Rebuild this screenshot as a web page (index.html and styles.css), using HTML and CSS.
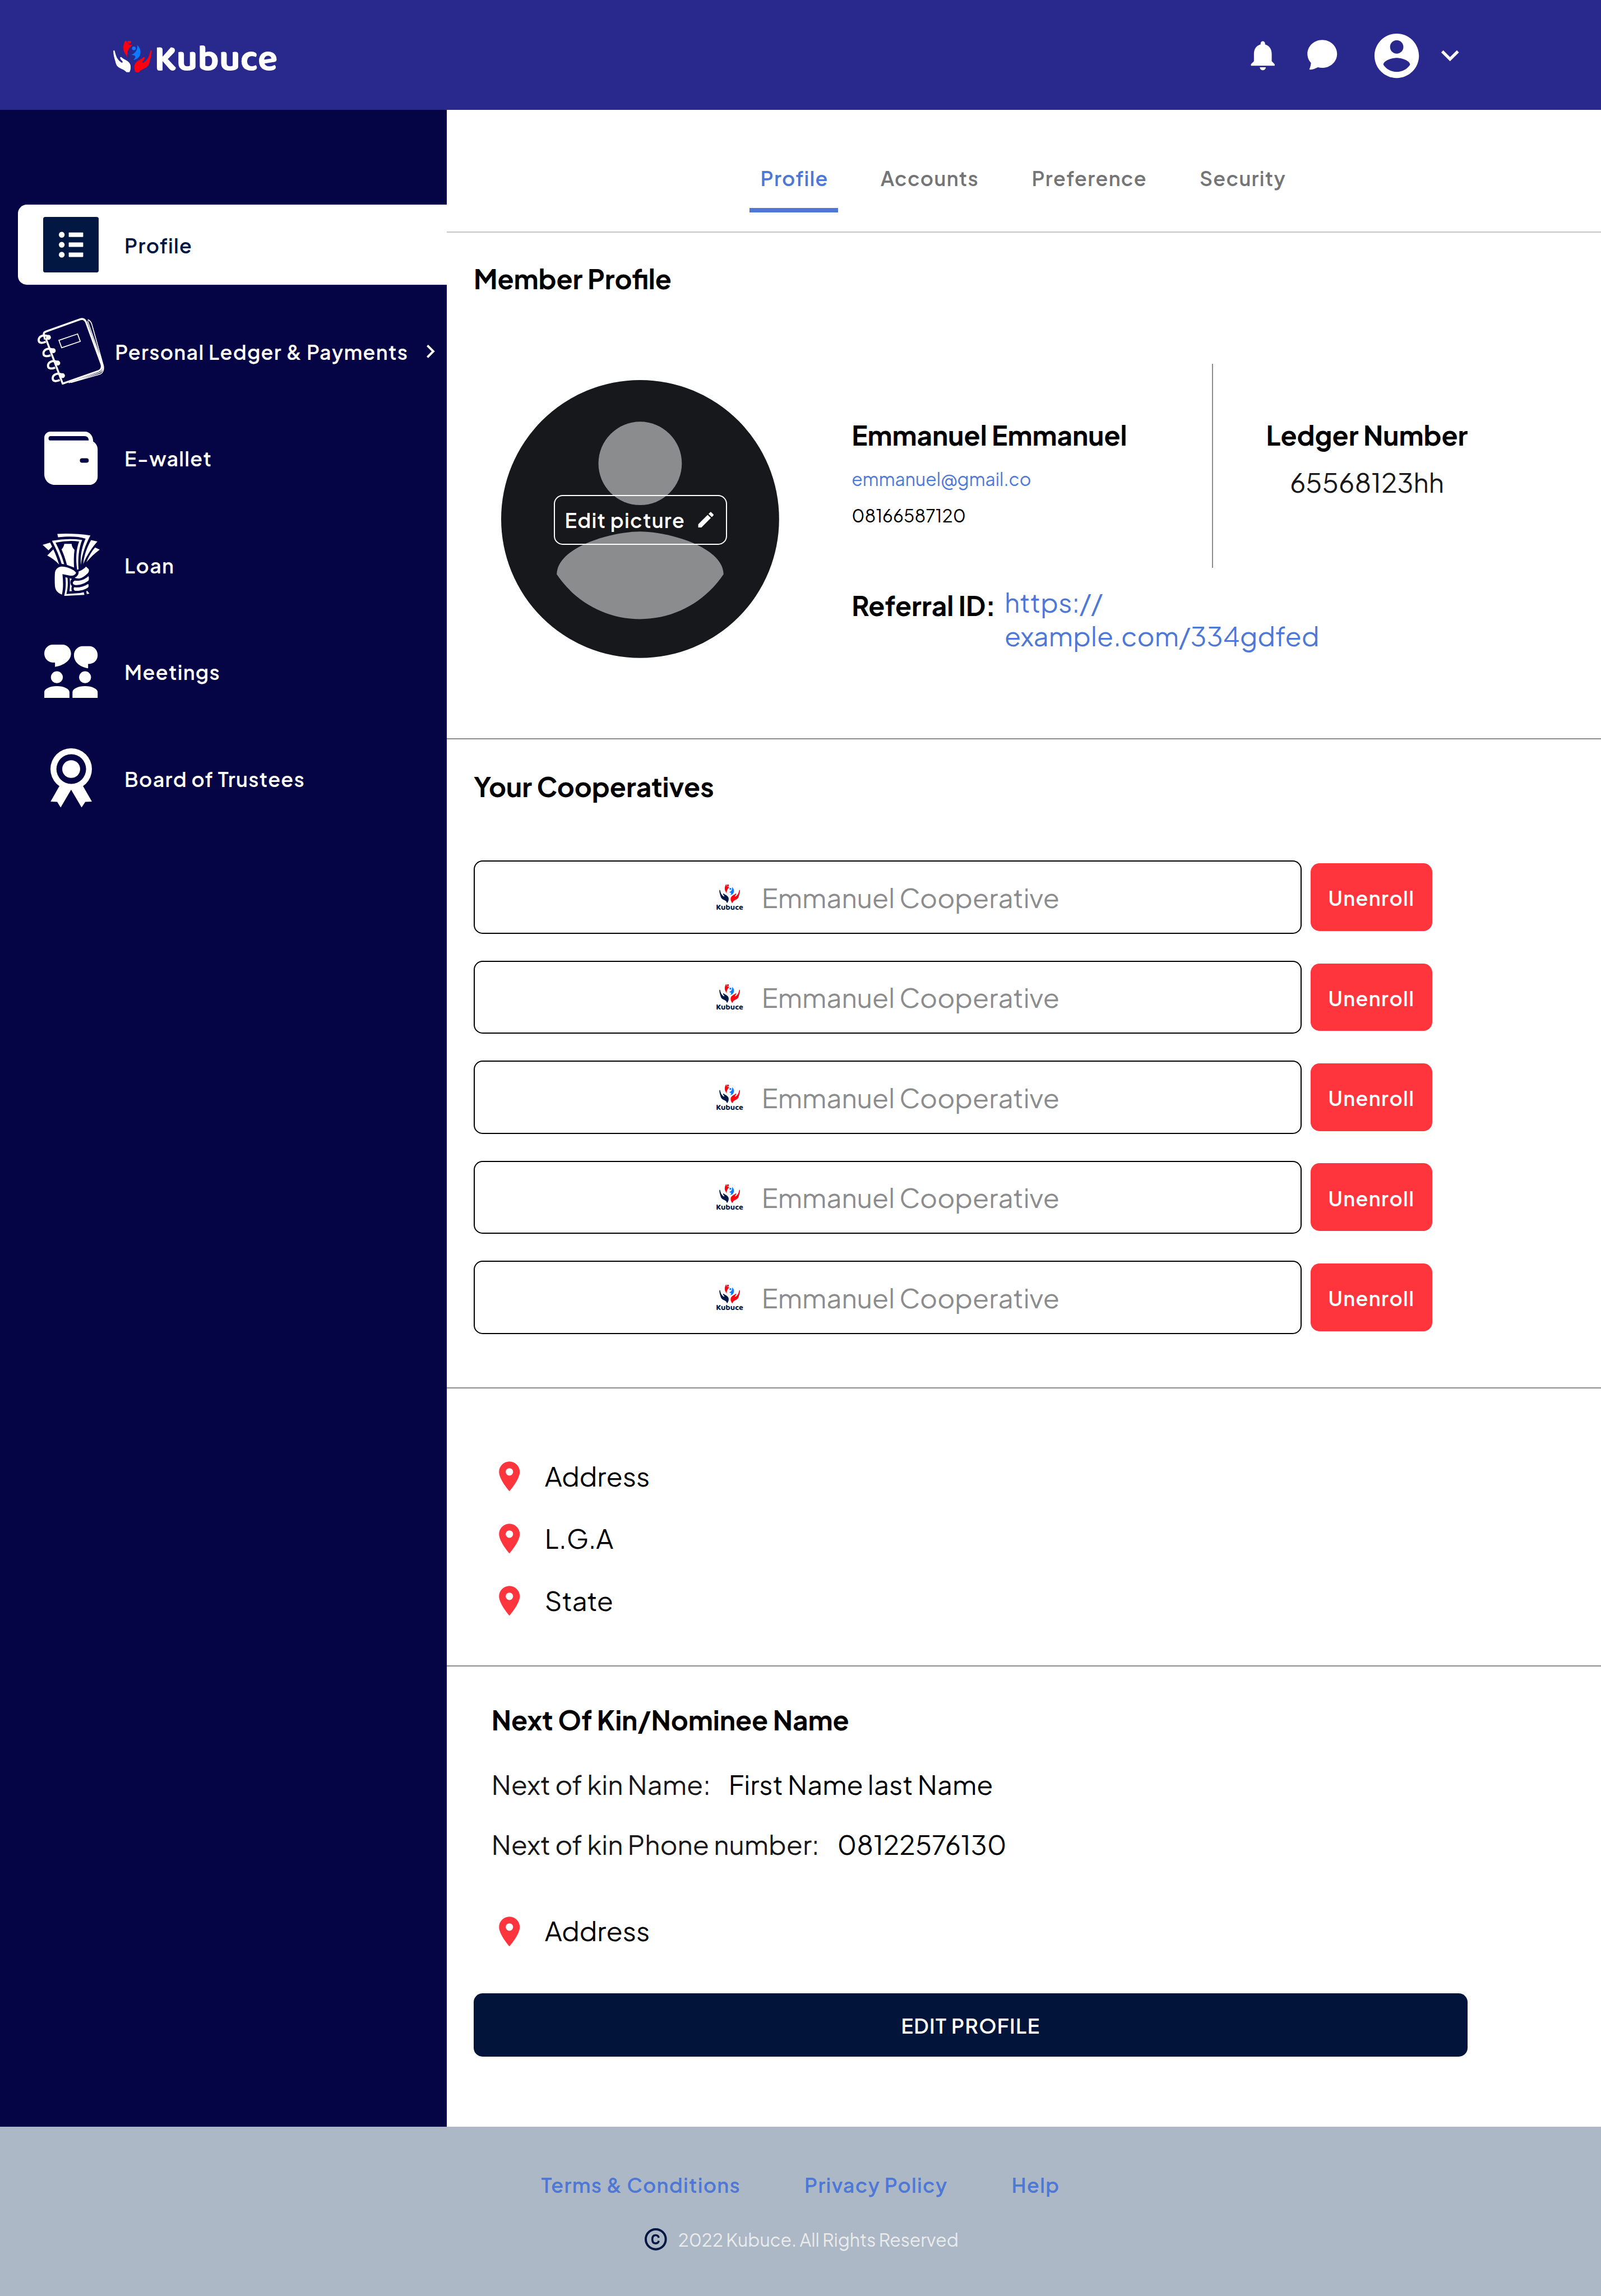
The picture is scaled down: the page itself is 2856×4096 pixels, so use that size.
FILE: index.html
```html
<!DOCTYPE html>
<html lang="en">
<head>
<meta charset="utf-8">
<title>Kubuce - Member Profile</title>
<link rel="stylesheet" href="styles.css">
</head>
<body>
<svg class="sprite" aria-hidden="true">
  <symbol id="palm" viewBox="78 79 313 285" overflow="visible">
    <path d="M79 172Q84 164 90 174C97 202 103 226 117 242C125 252 135 262 145 268C152 270 157 266 153 259C147 248 134 242 134 229C135 221 143 222 148 228C160 240 178 244 196 258C212 271 220 285 219 305C219 325 215 335 209 346L200 364L192 364L185 346C178 333 155 323 130 311C105 298 100 280 94 255C84 222 78 200 79 172Z"/>
  </symbol>
  <symbol id="people" viewBox="78 79 313 285" overflow="visible">
    <path fill="#ff0011" d="M389 172Q384 164 378 174C371 202 365 226 351 242C343 252 333 262 323 268C316 270 311 266 315 259C321 248 334 242 334 229C333 221 325 222 320 228C308 240 290 244 272 258C256 271 248 285 249 305C249 325 253 335 259 346L268 364L276 364L287 346C292 333 313 323 338 311C363 298 368 280 374 255C384 222 390 200 389 172Z"/>
    <path fill="#ff0011" d="M184 79C160 108 156 145 163 172C170 192 186 210 191 229C186 195 192 158 233 126C205 125 186 118 184 79Z"/>
    <circle fill="#ff0011" cx="208" cy="101" r="15"/>
    <circle fill="#0a7bff" cx="245" cy="153" r="15"/>
    <path fill="#0a7bff" d="M272 125C300 150 308 190 288 220C276 236 262 243 240 248C250 238 257 228 257 218C250 208 238 208 224 205C248 197 278 172 272 125Z"/>
  </symbol>
  <symbol id="coop" viewBox="0 0 25 24">
    <use href="#palm" x="3.1" y="0" width="18.7" height="17" fill="#021843"/>
    <use href="#people" x="3.1" y="0" width="18.7" height="17"/>
    <text class="coop-word" x="0.1" y="23.3" textLength="24.6" lengthAdjust="spacingAndGlyphs">Kubuce</text>
  </symbol>
  <symbol id="pin" viewBox="0 0 24 24">
    <path d="M12 2C8.13 2 5 5.13 5 9c0 5.25 7 13 7 13s7-7.75 7-13c0-3.87-3.13-7-7-7zm0 9.5a2.5 2.5 0 0 1 0-5 2.5 2.5 0 0 1 0 5z"/>
  </symbol>
  <symbol id="account" viewBox="0 0 24 24">
    <path d="M12 2C6.48 2 2 6.48 2 12s4.48 10 10 10 10-4.48 10-10S17.52 2 12 2zm0 3c1.66 0 3 1.34 3 3s-1.34 3-3 3-3-1.34-3-3 1.34-3 3-3zm0 14.2c-2.5 0-4.71-1.28-6-3.22.03-1.99 4-3.08 6-3.08 1.99 0 5.97 1.09 6 3.08-1.29 1.94-3.5 3.22-6 3.22z"/>
  </symbol>
</svg>

<header class="topbar">
  <svg class="logo" viewBox="78 -30 1350 499">
    <svg x="78" y="93" width="313" height="253" viewBox="78 93 313 253">
      <use href="#palm" x="78" y="79" width="313" height="285" fill="#fff"/>
      <use href="#people" x="78" y="79" width="313" height="285"/>
    </svg>
    <text class="logo-word" x="410" y="330" textLength="1000" lengthAdjust="spacing">Kubuce</text>
  </svg>
  <div class="actions">
    <svg class="ico bell" viewBox="0 0 24 24"><path d="M12 22c1.1 0 2-.9 2-2h-4c0 1.1.9 2 2 2zm6-6v-5c0-3.07-1.64-5.64-4.5-6.32V4c0-.83-.67-1.5-1.5-1.5s-1.5.67-1.5 1.5v.68C7.63 5.36 6 7.92 6 11v5l-2 2v1h16v-1l-2-2z"/></svg>
    <svg class="ico chat" viewBox="0 0 24 24"><path d="M12 2c5.52 0 10 4.2 10 9.4s-4.48 9.4-10 9.4c-1 0-2-.15-2.95-.42C7.6 21.2 5.5 22 3.6 22c-.25 0-.3-.25-.2-.5.5-1.2.95-2.5 1-4.1C2.9 15.8 2 13.7 2 11.4 2 6.2 6.48 2 12 2z"/></svg>
    <svg class="ico user"><use href="#account"/></svg>
    <svg class="ico" viewBox="0 0 24 24"><path d="M16.59 8.59 12 13.17 7.41 8.59 6 10l6 6 6-6z"/></svg>
  </div>
</header>

<div class="layout">
  <nav class="sidebar">
    <a class="item active">
      <svg class="i50" viewBox="0 0 50 50"><rect width="50" height="50" rx="2" fill="#021843"/><g fill="#fff"><circle cx="16.7" cy="16" r="2.6"/><circle cx="16.7" cy="25" r="2.6"/><circle cx="16.7" cy="34" r="2.6"/><rect x="23" y="14" width="13" height="4" rx=".4"/><rect x="23" y="23" width="13" height="4" rx=".4"/><rect x="23" y="32" width="13" height="4" rx=".4"/></g></svg>
      <span>Profile</span>
    </a>
    <a class="item wide">
      <svg class="i60" viewBox="0 0 60 60" fill="none" stroke="#fff">
        <path stroke-width="1.7" d="M6.6 19.5L5.6 14.6Q5.5 13.2 7.3 12.4L38.3 1.3Q42 0 43.7 4L57.4 41.5Q58.8 46 55 47.8L22.6 59.2L7.4 18.5"/>
        <path stroke-width=".8" d="M45.2 1.7Q48 2.6 49 6.5L59.3 43.5Q60 48.5 56.5 50.5L30 58.2M45 2.8L58.8 42.5Q59.6 47 56 49.2L28 58.5"/>
        <path stroke-width=".9" d="M19.2 20.2L36 14.5L38.4 21.2L21.7 26.9Z"/>
        <g stroke-width="1.9"><path d="M9.6 16.6C5 14.6 1 16.8 1 20C1 22.8 4 23 7.4 21.6"/><path d="M13.8 28.6C9.2 26.6 5.3 28.8 5.3 32C5.3 34.8 8.3 35 11.7 33.6"/><path d="M18 39.7C13.4 37.7 9.4 39.9 9.4 43.1C9.4 45.9 12.4 46.1 15.8 44.7"/><path d="M22.2 51C17.6 49 13.6 51.2 13.6 54.4C13.6 57.2 16.6 57.4 20 56"/></g>
        <g fill="#fff" stroke="none"><circle cx="9.8" cy="17.6" r="2.2"/><circle cx="14.1" cy="29.6" r="2.2"/><circle cx="18.2" cy="40.7" r="2.2"/><circle cx="22.4" cy="52" r="2.2"/></g>
      </svg>
      <span>Personal Ledger &amp; Payments</span>
      <svg class="arrow" viewBox="0 0 24 24"><path d="M10 6 8.59 7.41 13.17 12l-4.58 4.59L10 18l6-6z"/></svg>
    </a>
    <a class="item">
      <svg class="i48" viewBox="0 0 48 48"><path fill-rule="evenodd" d="M5.500 0H36.500C41 0 44 4 44 9C46.500 10.500 48 13 48 16V40.500C48 44.700 44.700 48 40.500 48H9.500C4.200 48 0 43.800 0 38.500V5.500C0 2.500 2.500 0 5.500 0ZM5.800 4A2 2 0 0 0 5.800 8H40C40 5.500 38.500 4 36.200 4ZM34 24A2 2 0 0 0 34 28H38A2 2 0 0 0 38 24Z"/></svg>
      <span>E-wallet</span>
    </a>
    <a class="item">
      <svg class="loan" viewBox="97 929 433 488" preserveAspectRatio="none">
        <path d="M208 931Q340 925 458 943C420 1020 395 1090 386 1175C380 1100 395 1030 422 968C360 948 290 950 214 958Z"/>
        <path d="M463 979L511 991C470 1040 430 1100 404 1168C410 1100 430 1040 463 979Z"/>
        <path d="M494 1038L529 1054C490 1082 455 1120 428 1153C445 1110 465 1070 494 1038Z"/>
        <path d="M97 1017L154 999L169 1031L142 1060Z"/>
        <path d="M178 1052C195 1090 210 1130 222 1172C195 1140 165 1118 132 1100Z"/>
        <path d="M168 985Q285 962 396 978C370 1040 362 1130 369 1208L358 1212C346 1130 350 1050 373 990Q290 980 195 999C220 1050 245 1110 260 1169L241 1166C225 1110 200 1050 168 985Z"/>
        <path d="M261 1009H316C318 1030 326 1044 338 1056C332 1100 332 1150 335 1195L281 1174C270 1130 256 1090 240 1052C252 1040 258 1026 261 1009Z"/>
        <path d="M190 1235C195 1205 215 1187 245 1187C290 1190 335 1212 350 1235C345 1250 330 1260 305 1258L247 1247C252 1300 255 1355 243 1407C210 1393 194 1375 190 1340Q187 1290 190 1235Z"/>
        <path d="M369 1226C390 1218 410 1205 425 1187L445 1207C450 1220 446 1230 438 1240C415 1262 395 1278 375 1280C360 1281 345 1280 339 1273C355 1270 372 1250 369 1226Z"/>
        <path d="M340 1297C380 1303 415 1290 443 1262C448 1275 448 1285 444 1297C415 1320 380 1334 345 1332C325 1330 315 1310 340 1297Z"/>
        <path d="M335 1350C375 1353 410 1345 441 1323C446 1335 445 1343 441 1350C415 1370 380 1380 343 1377C330 1372 330 1358 335 1350Z"/>
        <path d="M269 1271L285 1275C290 1320 287 1360 277 1402L380 1395L408 1388L413 1409L260 1417C272 1370 275 1320 269 1271Z"/>
        <path d="M302 1278L318 1284C300 1305 306 1325 318 1340C313 1355 313 1368 319 1379L300 1381C305 1345 305 1310 302 1278Z"/>
        <path d="M427 1382L434 1377L451 1399L431 1402Z"/>
      </svg>
      <span>Loan</span>
    </a>
    <a class="item">
      <svg class="i48" viewBox="112 120 403 432" preserveAspectRatio="none">
        <path d="M176 120H249C285 120 314 152 314 192C314 250 258 290 193 300V265H176C140 265 112 232 112 192C112 152 140 120 176 120Z"/>
        <path d="M402 132H452C488 132 515 164 515 205C515 245 488 277 443 277V312C380 300 336 262 336 205C336 164 366 132 402 132Z"/>
        <ellipse cx="207" cy="384" rx="45" ry="48"/><ellipse cx="420" cy="384" rx="45" ry="48"/>
        <path d="M112 552V504C112 478 155 456 207 456S302 478 302 504V552ZM325 552V504C325 478 368 456 420 456S515 478 515 504V552Z"/>
      </svg>
      <span>Meetings</span>
    </a>
    <a class="item">
      <svg class="award" viewBox="157 960 313 480" preserveAspectRatio="none">
        <path fill-rule="evenodd" d="M157 1128A156.500 168 0 1 1 470 1128A156.500 168 0 1 1 157 1128ZM202 1128A112 120 0 1 0 426 1128A112 120 0 1 0 202 1128Z"/>
        <ellipse cx="313.500" cy="1128" rx="67.500" ry="72"/>
        <path d="M224 1267L158 1391L208 1394L234 1439L313 1295L392 1439L420 1394L470 1391L403 1267Z"/>
      </svg>
      <span>Board of Trustees</span>
    </a>
  </nav>

  <main class="main">
    <div class="tabs">
      <a class="tab on">Profile</a>
      <a class="tab accounts">Accounts</a>
      <a class="tab preference">Preference</a>
      <a class="tab">Security</a>
    </div>

    <section class="section member">
      <h2>Member Profile</h2>
      <div class="profile">
        <div class="avatar">
          <svg class="portrait" viewBox="2 2 20 20"><circle cx="12" cy="12" r="10" fill="#17181b"/><circle cx="12" cy="8" r="3" fill="#8b8c8e"/><path fill="#8b8c8e" d="M12 19.200c-2.500 0-4.710-1.280-6-3.220.03-1.990 4-3.080 6-3.080 1.990 0 5.970 1.090 6 3.080-1.290 1.940-3.500 3.220-6 3.220z"/></svg>
          <button class="edit-picture">Edit picture
            <svg viewBox="0 0 24 24"><path d="M3 17.250V21h3.750L17.810 9.940l-3.750-3.750L3 17.250zM20.710 7.040c.39-.39.39-1.020 0-1.410l-2.340-2.340c-.39-.39-1.020-.39-1.410 0l-1.830 1.830 3.750 3.750 1.830-1.830z"/></svg>
          </button>
        </div>
        <div class="details">
          <div class="facts">
            <div class="who">
              <p class="strong">Emmanuel Emmanuel</p>
              <p class="email">emmanuel@gmail.co</p>
              <p class="phone">08166587120</p>
            </div>
            <div class="ledger">
              <p class="strong">Ledger Number</p>
              <p class="number">65568123hh</p>
            </div>
          </div>
          <div class="referral">
            <p class="strong">Referral ID:</p>
            <p class="link">https://<br>example.com/334gdfed</p>
          </div>
        </div>
      </div>
    </section>

    <section class="section coops">
      <h2>Your Cooperatives</h2>
      <ul class="coop-list">
        <li><div class="coop"><svg><use href="#coop"/></svg><span>Emmanuel Cooperative</span></div><button class="unenroll">Unenroll</button></li>
        <li><div class="coop"><svg><use href="#coop"/></svg><span>Emmanuel Cooperative</span></div><button class="unenroll">Unenroll</button></li>
        <li><div class="coop"><svg><use href="#coop"/></svg><span>Emmanuel Cooperative</span></div><button class="unenroll">Unenroll</button></li>
        <li><div class="coop"><svg><use href="#coop"/></svg><span>Emmanuel Cooperative</span></div><button class="unenroll">Unenroll</button></li>
        <li><div class="coop"><svg><use href="#coop"/></svg><span>Emmanuel Cooperative</span></div><button class="unenroll">Unenroll</button></li>
      </ul>
    </section>

    <section class="section places">
      <p class="place"><svg><use href="#pin"/></svg><span>Address</span></p>
      <p class="place"><svg><use href="#pin"/></svg><span>L.G.A</span></p>
      <p class="place"><svg><use href="#pin"/></svg><span>State</span></p>
    </section>

    <section class="section kin">
      <h2>Next Of Kin/Nominee Name</h2>
      <p class="pair"><span class="label">Next of kin Name:</span><span>First Name last Name</span></p>
      <p class="pair"><span class="label">Next of kin Phone number:</span><span>08122576130</span></p>
      <p class="place"><svg><use href="#pin"/></svg><span>Address</span></p>
      <button class="edit-profile">EDIT PROFILE</button>
    </section>
  </main>
</div>

<footer class="footer">
  <div class="links"><a>Terms &amp; Conditions</a><a>Privacy Policy</a><a>Help</a></div>
  <p class="copy">
    <svg viewBox="0 0 24 24" fill="none" stroke="#021843"><circle cx="12" cy="12" r="9" stroke-width="2"/><path stroke-width="1.800" d="M14.700 10.700C14.400 9.200 13.400 8.300 11.900 8.300C10 8.300 8.900 9.700 8.900 12S10 15.700 11.900 15.700C13.400 15.700 14.500 14.800 14.700 13.400"/></svg>
    <span>2022 Kubuce. All Rights Reserved</span>
  </p>
</footer>
</body>
</html>
```
FILE: styles.css
```css
/* 1rem = 10 layout units; the page is 144rem wide */
html { font-size: calc(100vw / 144); }
* { box-sizing: border-box; margin: 0; padding: 0; }
body {
  font-family: "Plus Jakarta Sans", Inter, sans-serif;
  font-size: 2.4rem;
  font-weight: 400;
  line-height: 3rem;
  color: #000;
  background: #fff;
}
.sprite { display: none; }
svg { display: block; flex: none; }
button { font-family: inherit; border: 0; cursor: pointer; }
ul { list-style: none; }

/* Top bar */
.topbar {
  display: flex;
  justify-content: space-between;
  align-items: center;
  height: 9.9rem;
  padding: 0.1rem 12rem 0 10.2rem;
  background: #29288d;
  fill: #fff;
}
.logo { width: 15rem; height: 5.544rem; margin-top: 0.2rem; overflow: visible; }
.logo-word, .coop-word { font-family: "Baloo 2", Inter, sans-serif; font-weight: 700; }
.logo-word { font-size: 300px; }
.coop-word { font-size: 7.4px; fill: #021843; }
.actions { display: flex; align-items: center; }
.ico { width: 3.2rem; height: 3.2rem; }
.bell { margin-right: 2.13rem; }
.chat { margin: -0.14rem 2.67rem 0 0; }
.user { width: 4.8rem; height: 4.8rem; margin-right: 0.8rem; }

.layout { display: flex; height: 181.4rem; }

/* Sidebar */
.sidebar {
  display: flex;
  flex-direction: column;
  gap: 2.4rem;
  width: 40.2rem;
  padding: 8.5rem 0 0 1.6rem;
  background: #050444;
}
.item {
  display: grid;
  grid-template-columns: 5rem auto;
  justify-content: start;
  justify-items: center;
  align-items: center;
  column-gap: 2.3rem;
  height: 7.2rem;
  padding-left: 2.3rem;
  font-size: 1.8rem;
  font-weight: 600;
  letter-spacing: 0.036em;
  line-height: 2.4rem;
  color: #fff;
  fill: #fff;
}
.item span { padding-top: 0.12rem; }
.item.active { background: #fff; color: #021843; border-radius: 0.8rem 0 0 0.8rem; }
.item.wide {
  grid-template-columns: 6rem auto 2.4rem;
  column-gap: 0.95rem;
  padding-left: 1.8rem;
}
.item.wide span { margin-right: -0.15rem; }
.i50 { width: 5rem; height: 5rem; }
.i60 { width: 6rem; height: 6rem; }
.i48 { width: 4.8rem; height: 4.8rem; }
.loan { width: 5.155rem; height: 5.6rem; }
.award { width: 3.73rem; height: 5.33rem; }
.arrow { width: 2.4rem; height: 2.4rem; }

/* Main column */
.main { width: 103.8rem; }
.tabs {
  display: flex;
  gap: 2.8rem;
  height: 11rem;
  padding: 4.4rem 0 0 27.2rem;
  border-bottom: 2px solid #c6c6c6;
}
.tab {
  height: 4.8rem;
  padding: 0.5rem 1rem 0;
  font-size: 1.8rem;
  font-weight: 600;
  letter-spacing: 0.036em;
  line-height: 2.4rem;
  color: #747577;
}
.tab.on { width: 8rem; color: #4e78d6; border-bottom: 8px solid #4e78d6; }
.tab.accounts { width: 10.8rem; }
.tab.preference { width: 12.3rem; }

.section { padding: 2.68rem 0 0 2.4rem; border-bottom: 2px solid #8b8c8e; }
h2, .strong { font-size: 2.4rem; font-weight: 700; line-height: 3rem; }

.member { height: 45.6rem; }
.profile { display: flex; gap: 6.5rem; margin-top: 6.12rem; padding-left: 2.5rem; }
.avatar { display: grid; place-items: center; width: 25rem; height: 25rem; margin-top: 1.5rem; }
.avatar > * { grid-area: 1 / 1; }
.portrait { width: 25rem; height: 25rem; }
.edit-picture {
  display: flex;
  align-items: center;
  justify-content: space-between;
  width: 15.6rem;
  height: 4.5rem;
  margin-top: 0.1rem;
  padding: 0 0.9rem 0 0.9rem;
  font-size: 1.8rem;
  font-weight: 600;
  letter-spacing: 0.036em;
  color: #fff;
  background: none;
  border: 2px solid #fff;
  border-radius: 0.8rem;
}
.edit-picture svg { width: 1.84rem; height: 1.84rem; fill: #fff; }

.facts { display: flex; height: 18.4rem; }
.who { width: 32.5rem; padding-top: 4.99rem; border-right: 2px solid #8b8c8e; }
.email, .phone { font-size: 1.6rem; line-height: 2.4rem; letter-spacing: 0.002em; }
.email { margin-top: 1.22rem; color: #4e78d6; }
.phone { margin-top: 0.88rem; }
.ledger { width: 27.7rem; padding-top: 4.99rem; text-align: center; }
.number { margin-top: 1.21rem; color: #17181b; }
.referral { display: flex; margin-top: 1.6rem; }
.referral .strong { width: 13.75rem; padding-top: 0.27rem; }
.link { color: #4e78d6; letter-spacing: 0.0015em; }

.coops { height: 58.4rem; padding-top: 2.8rem; }
.coop-list { display: grid; gap: 2.4rem; margin-top: 5.1rem; }
.coop-list li { display: flex; align-items: center; gap: 0.8rem; }
.coop {
  display: flex;
  align-items: center;
  justify-content: center;
  gap: 1.6rem;
  width: 74.5rem;
  height: 6.6rem;
  border: 2px solid #000;
  border-radius: 0.8rem;
  color: #8b8c8e;
}
.coop svg { width: 2.5rem; height: 2.4rem; }
.coop span { padding-top: 0.12rem; }
.unenroll {
  width: 10.9rem;
  height: 6.1rem;
  padding-top: 0.12rem;
  font-size: 1.8rem;
  font-weight: 600;
  letter-spacing: 0.038em;
  color: #fff;
  background: #ff353d;
  border-radius: 0.8rem;
}

.places { display: flex; flex-direction: column; gap: 2.4rem; height: 25rem; padding: 6.3rem 0 0 4rem; }
.place { display: flex; align-items: center; gap: 1.6rem; height: 3.2rem; }
.place svg { width: 3.2rem; height: 3.2rem; fill: #ff353d; }
.place span { padding-bottom: 0.04rem; }

.kin { padding: 3.33rem 0 0 4rem; border: 0; }
.pair { display: flex; gap: 1.6rem; margin-top: 2.8rem; }
.pair + .pair { margin-top: 2.4rem; }
.label { color: #17181b; }
.kin .place { margin-top: 4.7rem; }
.edit-profile {
  width: 89.4rem;
  height: 5.7rem;
  margin: 3.97rem 0 0 -1.6rem;
  padding-top: 0.1rem;
  font-size: 1.8rem;
  font-weight: 600;
  letter-spacing: 0.038em;
  color: #fff;
  background: #021439;
  border-radius: 0.8rem;
}

/* Footer */
.footer { height: 15.2rem; padding-top: 4.03rem; background: #adb8c7; }
.links, .copy { display: flex; justify-content: center; align-items: center; line-height: 2.4rem; }
.links { gap: 5.75rem; font-size: 1.8rem; font-weight: 600; letter-spacing: 0.036em; color: #4e78d6; }
.copy { gap: 0.8rem; margin-top: 2.42rem; font-size: 1.6rem; color: #ebebeb; }
.copy svg { width: 2.4rem; height: 2.4rem; }
.copy span { padding-top: 0.1rem; }
```
